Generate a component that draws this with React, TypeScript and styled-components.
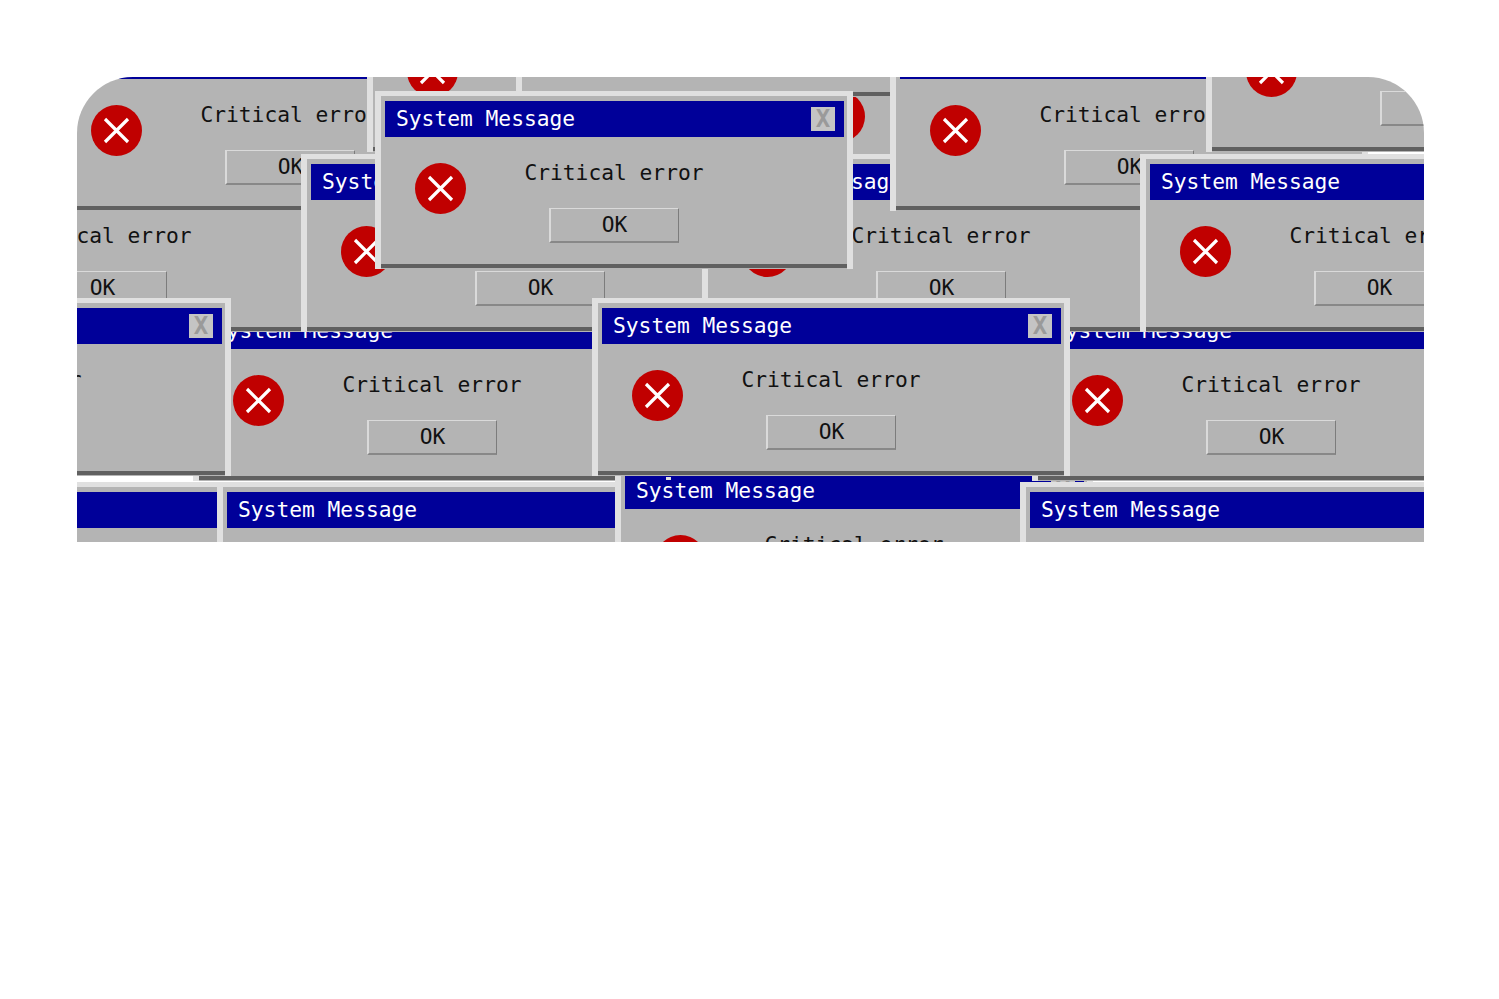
import styled, { createGlobalStyle } from 'styled-components';

// stage-relative origin of each window, listed back to front
const WINDOWS = [
  { id: 'f', x: 699, y: -58 },
  { id: 's', x: -277, y: 405 },
  { id: 'p', x: 142, y: 405 },
  { id: 'n', x: 118, y: 226 },
  { id: 'r', x: 540, y: 386 },
  { id: 'q', x: 945, y: 405 },
  { id: 'o', x: 957, y: 226 },
  { id: 'b', x: -212, y: 77 },
  { id: 'a', x: -24, y: -44 },
  { id: 'e', x: 292, y: -103 },
  { id: 'i', x: 441, y: -158 },
  { id: 'c', x: 226, y: 77 },
  { id: 'g', x: 627, y: 77 },
  { id: 'h', x: 815, y: -44 },
  { id: 'k', x: 1131, y: -103 },
  { id: 'l', x: 1065, y: 77 },
  { id: 'm', x: -322, y: 221 },
  { id: 'center', x: 517, y: 221 },
  { id: 'd', x: 300, y: 14 },
];

const GlobalStyle = createGlobalStyle`
  html, body {
    margin: 0;
    background: #ffffff;
  }
`;

function ErrorIcon() {
  return (
    <IconSvg viewBox="0 0 51 51">
      <circle cx="25.5" cy="25.5" r="25.5" fill="#c00000" />
      <path d="M14 14 L37 37 M37 14 L14 37" stroke="#ffffff" strokeWidth="3.2" fill="none" />
    </IconSvg>
  );
}

function Dialog({ x, y }: { x: number; y: number }) {
  return (
    <Window $x={x} $y={y}>
      <TitleBar>
        <TitleText>System Message</TitleText>
        <CloseButton>X</CloseButton>
      </TitleBar>
      <Body>
        <ErrorIcon />
        <Content>
          <Message>Critical error</Message>
          <OkButton>OK</OkButton>
        </Content>
      </Body>
    </Window>
  );
}

export default function App() {
  return (
    <Page>
      <GlobalStyle />
      <Stage>
        {WINDOWS.map((w) => (
          <Dialog key={w.id} x={w.x} y={w.y} />
        ))}
        <Speck />
      </Stage>
    </Page>
  );
}

const Page = styled.div`
  width: 1499px;
  height: 999px;
  padding: 77px 0 0 77px;
  box-sizing: border-box;
  background: #ffffff;
  overflow: hidden;
`;

const Stage = styled.div`
  position: relative;
  width: 1347px;
  height: 465px;
  border-radius: 56px 56px 0 0;
  overflow: hidden;
  background: #ffffff;
`;

/* the frame starts 2px left of the origin, the side borders are a bit wider than the top one */
const Window = styled.div<{ $x: number; $y: number }>`
  position: absolute;
  left: ${(p) => p.$x - 2}px;
  top: ${(p) => p.$y}px;
  width: 478px;
  height: 178px;
  box-sizing: border-box;
  display: flex;
  flex-direction: column;
  padding: 5px 3px 0 4px;
  border: solid #e0e0e0;
  border-width: 5px 6px 0;
  background: #b4b4b4;
  font-family: 'DejaVu Sans Mono', monospace;
  font-size: 21.25px;

  &::after {
    content: '';
    position: absolute;
    left: 0;
    right: 0;
    bottom: 1px;
    height: 4px;
    background: #606060;
  }
`;

const TitleBar = styled.div`
  height: 36px;
  flex: none;
  display: flex;
  align-items: center;
  justify-content: space-between;
  padding: 0 9px 0 11px;
  background: #000099;
  color: #ffffff;
`;

const TitleText = styled.span`
  line-height: 36px;
  white-space: nowrap;
`;

const CloseButton = styled.span`
  width: 24px;
  height: 24px;
  flex: none;
  display: flex;
  align-items: center;
  justify-content: center;
  background: #c4c4c4;
  color: #9a9a9a;
  font-size: 24px;
  font-weight: 700;
`;

const Body = styled.div`
  display: flex;
  padding: 26px 0 0 30px;
`;

const IconSvg = styled.svg`
  width: 51px;
  height: 51px;
  flex: none;
`;

const Content = styled.div`
  width: 180px;
  margin: -2px 0 0 58px;
  display: flex;
  flex-direction: column;
  align-items: center;
`;

const Message = styled.div`
  height: 24px;
  line-height: 24px;
  color: #111111;
  white-space: nowrap;
`;

const OkButton = styled.div`
  width: 130px;
  height: 35px;
  margin-top: 23px;
  padding-bottom: 2px;
  box-sizing: border-box;
  display: flex;
  align-items: center;
  justify-content: center;
  border-style: solid;
  border-width: 1px 1px 2px 2px;
  border-color: #dadada #7c7c7c #888888 #dadada;
  color: #111111;
`;

const Speck = styled.div`
  position: absolute;
  left: 589px;
  top: 400px;
  width: 5px;
  height: 3px;
  background: #e0e0e0;
`;
